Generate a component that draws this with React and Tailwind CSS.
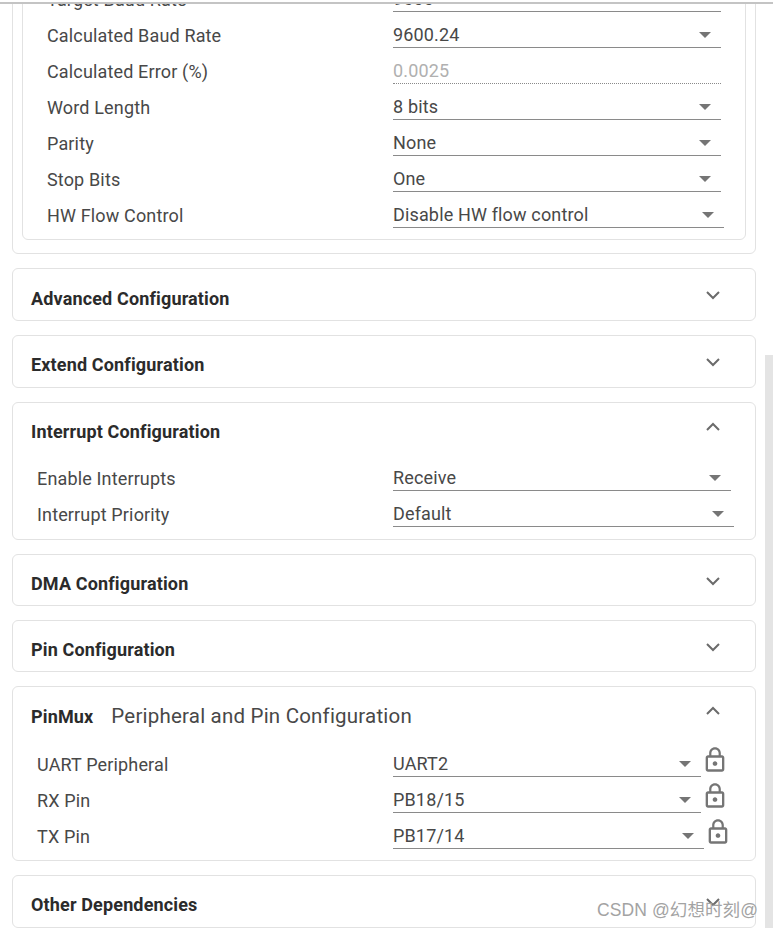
const F = { fontFamily: 'Roboto, sans-serif' };

function Arrow({ className = '' }) {
  return (
    <svg width="12" height="6" viewBox="0 0 12 6" className={className}>
      <path d="M0 0h12L6 6z" fill="#757575" />
    </svg>
  );
}

function Lock() {
  return (
    <svg width="28" height="28" viewBox="0 0 24 24" fill="#757575" className="shrink-0">
      <path d="M12 17c1.1 0 2-.9 2-2s-.9-2-2-2-2 .9-2 2 .9 2 2 2zm6-9h-1V6c0-2.76-2.24-5-5-5S7 3.24 7 6v2H6c-1.1 0-2 .9-2 2v10c0 1.1.9 2 2 2h12c1.1 0 2-.9 2-2V10c0-1.1-.9-2-2-2zM8.9 6c0-1.71 1.39-3.1 3.1-3.1s3.1 1.39 3.1 3.1v2H8.9V6zM18 20H6V10h12v10z" />
    </svg>
  );
}

function Chevron({ up }) {
  return (
    <svg width="16" height="10" viewBox="0 0 16 10" fill="none" className={up ? 'shrink-0' : 'mt-[3px] shrink-0'}>
      <path d={up ? 'M2 8l6-6 6 6' : 'M2 2l6 6 6-6'} stroke="#6b6b6b" strokeWidth="2" />
    </svg>
  );
}

function Row({ label, value, width, disabled, labelW, lock }) {
  return (
    <div className="flex h-9 items-end">
      <div className="text-[18px] leading-6 tracking-[0.15px] text-[#484848]" style={{ width: labelW }}>{label}</div>
      <div
        className={`flex h-7 items-center justify-between border-b pr-[10px] pt-[2px] text-[18px] tracking-[0.15px] ${disabled ? 'border-dotted border-[#8a8a8a] text-[#b0b0b0]' : 'border-[#8a8a8a] text-[#484848]'}`}
        style={{ width }}
      >
        <span>{value}</span>
        {!disabled && <Arrow />}
      </div>
      {lock && <div className="mb-[1px] -translate-y-[2px]"><Lock /></div>}
    </div>
  );
}

function Card({ title, sub, height, open, low, children }) {
  return (
    <section className="mx-3 w-[744px] rounded-md border border-[#e2e2e2]" style={{ height }}>
      <div className="flex h-[52px] items-center justify-between pl-[18px] pr-[34px]">
        <div className={`flex items-baseline gap-[18px] ${low ? 'pt-[7px]' : 'pt-[5px]'}`}>
          <span className="text-[18px] font-bold tracking-[0.15px] text-[#2b2b2b]">{title}</span>
          {sub && <span className="text-[20.5px] tracking-[0.2px] text-[#484848]">{sub}</span>}
        </div>
        <div className="-mt-1"><Chevron up={open} /></div>
      </div>
      {children}
    </section>
  );
}

export default function App() {
  return (
    <div className="relative h-[928px] w-[773px] overflow-hidden bg-white" style={F}>
      <div className="-mt-[60px] flex flex-col gap-[14px]">
        <section className="mx-3 h-[314px] w-[744px] rounded-md border border-[#e2e2e2] pl-[9px] pr-[9px]">
          <div className="mt-[-1px] h-[300px] rounded-md border border-[#e2e2e2] pl-[24px] pt-[35px]">
            <Row label="Target Baud Rate" value="9600" width={328} labelW={346} />
            <Row label="Calculated Baud Rate" value="9600.24" width={328} labelW={346} />
            <Row label="Calculated Error (%)" value="0.0025" width={328} labelW={346} disabled />
            <Row label="Word Length" value="8 bits" width={328} labelW={346} />
            <Row label="Parity" value="None" width={328} labelW={346} />
            <Row label="Stop Bits" value="One" width={328} labelW={346} />
            <Row label="HW Flow Control" value="Disable HW flow control" width={331} labelW={346} />
          </div>
        </section>
        <Card title="Advanced Configuration" height={53} low />
        <Card title="Extend Configuration" height={53} />
        <Card title="Interrupt Configuration" height={138} open>
          <div className="pl-6">
            <Row label="Enable Interrupts" value="Receive" width={338} labelW={356} />
            <Row label="Interrupt Priority" value="Default" width={341} labelW={356} />
          </div>
        </Card>
        <Card title="DMA Configuration" height={52} />
        <Card title="Pin Configuration" height={52} />
        <Card title="PinMux" sub="Peripheral and Pin Configuration" height={175} open low>
          <div className="pl-6 pt-[2px]">
            <Row label="UART Peripheral" value="UART2" width={308} labelW={356} lock />
            <Row label="RX Pin" value="PB18/15" width={308} labelW={356} lock />
            <Row label="TX Pin" value="PB17/14" width={311} labelW={356} lock />
          </div>
        </Card>
        <Card title="Other Dependencies" height={53} />
      </div>
      <div className="absolute left-0 top-0 h-1 w-full border-b-2 border-[#c4c4c4] bg-white" />
      <div className="absolute bottom-0 right-0 top-[355px] w-2 bg-[#e4e4e4]" />
      <div className="absolute left-[597px] top-[900px] text-[17.5px] leading-5 tracking-[0.1px] text-[#a3a3a3]" style={{ fontFamily: '"Liberation Sans", "Noto Sans CJK SC", sans-serif' }}>CSDN @幻想时刻@</div>
    </div>
  );
}
